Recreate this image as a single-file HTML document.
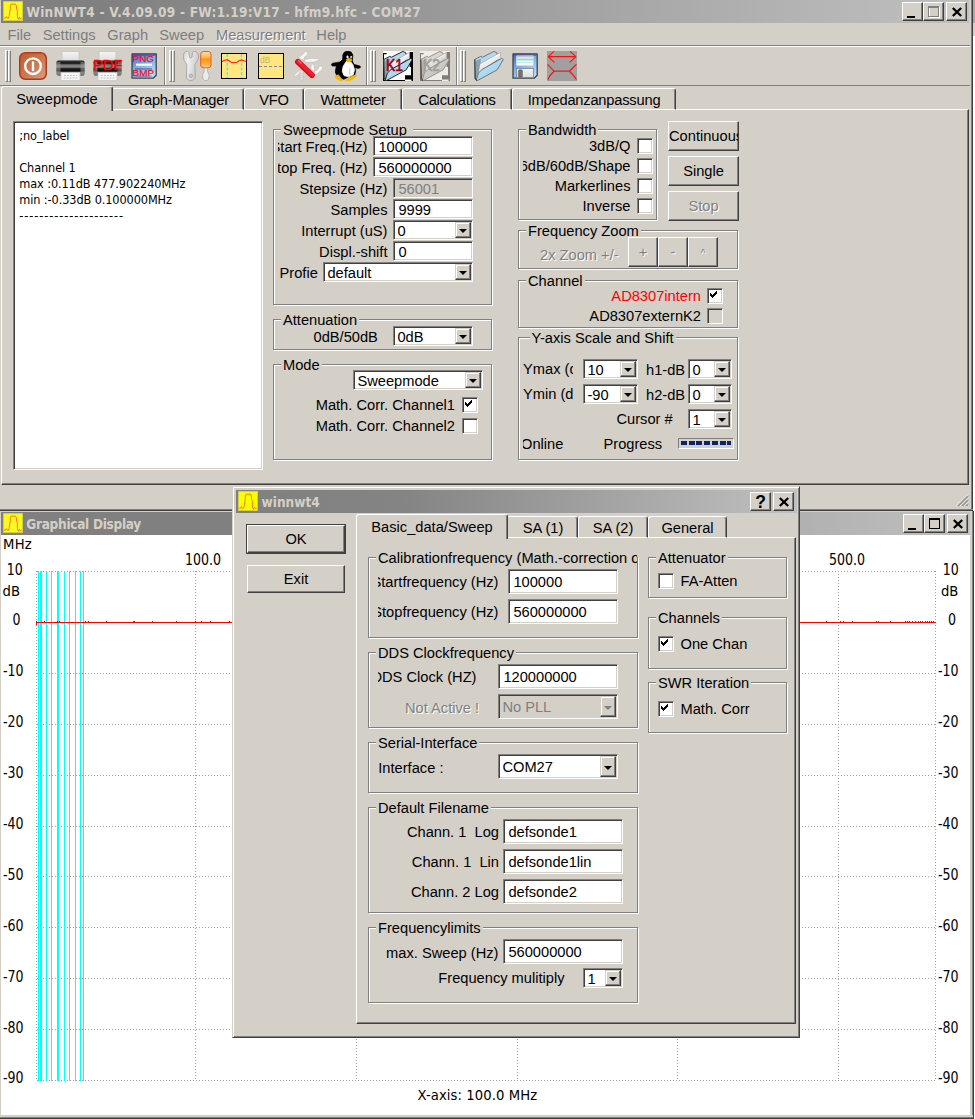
<!DOCTYPE html>
<html><head><meta charset="utf-8"><title>WinNWT4</title>
<style>
html,body{margin:0;padding:0}
body{width:975px;height:1119px;overflow:hidden;background:#d4d0c8;position:relative;
 font-family:"Liberation Sans",sans-serif;font-size:14.67px;color:#000;line-height:17px}
div,span,svg{position:absolute;box-sizing:border-box}
.t{white-space:pre;height:19px;line-height:19px}
.r{text-align:right}
.c{text-align:center}
.dis{color:#808080;text-shadow:1px 1px 0 #fff}
.th{font-family:"DejaVu Sans Condensed","DejaVu Sans",sans-serif}
.ttl{font-family:"DejaVu Sans Condensed","DejaVu Sans",sans-serif;font-weight:bold;color:#d4d0c8;font-size:13.5px;white-space:pre;line-height:20px;height:20px}
.grp{border:1px solid #808080;box-shadow:1px 1px 0 #fff, inset 1px 1px 0 #fff}
.leg{background:#d4d0c8;white-space:pre;height:19px;line-height:19px;padding:0 2px}
.ed{background:#fff;border:1px solid;border-color:#808080 #fff #fff #808080;box-shadow:inset 1px 1px 0 #404040, inset -1px -1px 0 #d4d0c8;white-space:pre;overflow:hidden}
.ed.g{background:#d4d0c8;color:#808080}
.ed span{position:absolute;left:5px;top:1px;height:19px;line-height:19px}
.btn{background:#d4d0c8;border:1px solid;border-color:#fff #404040 #404040 #fff;box-shadow:inset -1px -1px 0 #808080, inset 1px 1px 0 #d4d0c8;text-align:center;white-space:pre;overflow:hidden}
.cb{background:#d4d0c8;border:1px solid;border-color:#d4d0c8 #404040 #404040 #d4d0c8;box-shadow:inset -1px -1px 0 #808080, inset 1px 1px 0 #fff}
.cb i{position:absolute;left:50%;top:50%;margin:-1px 0 0 -4px;width:0;height:0;border-left:4px solid transparent;border-right:4px solid transparent;border-top:4px solid #000}
.cb.g i{border-top-color:#808080}
.chk{background:#fff;border:1px solid;border-color:#808080 #fff #fff #808080;box-shadow:inset 1px 1px 0 #404040, inset -1px -1px 0 #d4d0c8}
.chk.g{background:#d4d0c8}
.tab{border:1px solid;border-color:#fff #404040 transparent #fff;border-radius:3px 3px 0 0;box-shadow:inset -1px 0 0 #808080;background:#d4d0c8;text-align:center;white-space:pre}
.pane{border:1px solid;border-color:#fff #404040 #404040 #fff;box-shadow:inset -1px -1px 0 #808080;background:#d4d0c8}
.hl{height:2px;border-top:1px solid #808080;border-bottom:1px solid #fff}
.hdl{width:3px;border:1px solid;border-color:#fff #808080 #808080 #fff}
.vsep{width:2px;border-left:1px solid #808080;border-right:1px solid #fff}
</style></head>
<body>

<svg width="0" height="0" style="left:0;top:0"><defs>
<linearGradient id="gpw" x1="0" y1="0" x2="1" y2="1"><stop offset="0" stop-color="#c25a2c"/><stop offset="0.55" stop-color="#cf7850"/><stop offset="1" stop-color="#dfa080"/></linearGradient>
<linearGradient id="gpr" x1="0" y1="0" x2="0" y2="1"><stop offset="0" stop-color="#9a9a9a"/><stop offset="0.1" stop-color="#2a2a2a"/><stop offset="0.2" stop-color="#141414"/><stop offset="0.3" stop-color="#727272"/><stop offset="0.44" stop-color="#8c8c8c"/><stop offset="0.52" stop-color="#2a2a2a"/><stop offset="0.66" stop-color="#0c0c0c"/><stop offset="0.78" stop-color="#626262"/><stop offset="1" stop-color="#828282"/></linearGradient>
<linearGradient id="gpp" x1="0" y1="0" x2="0" y2="1"><stop offset="0" stop-color="#f4f4f4"/><stop offset="1" stop-color="#dcdcdc"/></linearGradient>
<linearGradient id="gfl" x1="0" y1="0" x2="0.6" y2="1"><stop offset="0" stop-color="#3c64c0"/><stop offset="0.5" stop-color="#7eaee6"/><stop offset="1" stop-color="#b4dcf6"/></linearGradient>
<linearGradient id="gor" x1="0" y1="0" x2="0" y2="1"><stop offset="0" stop-color="#ffe0b0"/><stop offset="0.36" stop-color="#ffb850"/><stop offset="0.46" stop-color="#ff9608"/><stop offset="0.7" stop-color="#ffa838"/><stop offset="1" stop-color="#ffc880"/></linearGradient>
<linearGradient id="gwr" x1="0" y1="0" x2="1" y2="0.3"><stop offset="0" stop-color="#d0d0d0"/><stop offset="0.35" stop-color="#f0f0f0"/><stop offset="1" stop-color="#cacaca"/></linearGradient>
<linearGradient id="gfo" x1="0" y1="0" x2="1" y2="1"><stop offset="0" stop-color="#c4e4f6"/><stop offset="0.6" stop-color="#aad6ee"/><stop offset="1" stop-color="#9ccae4"/></linearGradient>
<linearGradient id="gfg" x1="0" y1="0" x2="1" y2="1"><stop offset="0" stop-color="#e4e2dc"/><stop offset="1" stop-color="#b4b2ac"/></linearGradient>
<linearGradient id="grd" x1="0" y1="0" x2="1" y2="0"><stop offset="0" stop-color="#ff4050"/><stop offset="1" stop-color="#d00818"/></linearGradient>
</defs></svg>

<div class="" style="left:971px;top:0px;width:1px;height:510px;background:#808080"></div>
<div class="" style="left:972px;top:0px;width:1px;height:511px;background:#404040"></div>
<div class="" style="left:973px;top:0px;width:2px;height:1119px;background:#fff"></div>
<div class="" style="left:973px;top:0px;width:2px;height:23px;background:#a8a8a8"></div>
<div class="" style="left:973px;top:23px;width:2px;height:13px;background:#d4d0c8"></div>
<div class="" style="left:1px;top:0px;width:968px;height:23px;background:linear-gradient(90deg,#808080 0%,#808080 10%,#c0c0c0 100%)"></div>
<svg style="left:3px;top:1px" width="20" height="20" viewBox="0 0 20 20" ><rect width="20" height="20" fill="#ffff00"/><path d="M0 4.5H20M0 8.5H20M0 12.5H20M0 16.5H20M3.5 0V20M7.5 0V20M11.5 0V20M15.5 0V20" stroke="#eeee58" stroke-width="0.8" fill="none"/><path d="M0.6 16.2 L2 17.6 L3.3 15.6 L4.9 17.6 L6.1 15.6 L6.6 11.9 L7.2 8.6 L7.4 4.5 L8.2 3.1 L12.5 3.1 L13.3 4.5 L13.7 8.6 L14.3 10.2 L14.5 16.8 L15.6 18.4 L16.4 16.2 L17.4 17.6 L18.6 17.2" stroke="#ff6200" stroke-width="0.9" fill="none" stroke-linejoin="round" opacity="0.9"/><rect x="0.4" y="0.4" width="19.2" height="19.2" fill="none" stroke="#c4c45c" stroke-width="0.8"/></svg>
<span class="ttl" style="left:26.5px;top:1.8px;letter-spacing:0.27px">WinNWT4 - V.4.09.09 - FW:1.19:V17 - hfm9.hfc - COM27</span>
<div class="btn" style="left:902px;top:2px;width:21px;height:19px;"><svg width="19" height="17" viewBox="0 0 19 17" style="left:0;top:0"><rect x="4" y="13" width="8" height="2" fill="#000"/></svg></div>
<div class="btn" style="left:923px;top:2px;width:21px;height:19px;"><svg width="19" height="17" viewBox="0 0 19 17" style="left:0;top:0"><rect x="5.5" y="4.5" width="10" height="10" fill="none" stroke="#fff" stroke-width="1"/><rect x="4.5" y="3.5" width="10" height="10" fill="none" stroke="#808080" stroke-width="1"/><rect x="4" y="3" width="11" height="2" fill="#808080"/></svg></div>
<div class="btn" style="left:946px;top:2px;width:21px;height:19px;"><svg width="19" height="17" viewBox="0 0 19 17" style="left:0;top:0"><path d="M5.8 5.0 L14.2 13.0 M14.2 5.0 L5.8 13.0" stroke="#000" stroke-width="2.3"/></svg></div>
<span class="t" style="left:7.5px;top:26.4px;color:#7c7c80">File</span>
<span class="t" style="left:42.7px;top:26.4px;color:#7c7c80">Settings</span>
<span class="t" style="left:107.3px;top:26.4px;color:#7c7c80">Graph</span>
<span class="t" style="left:159.3px;top:26.4px;color:#7c7c80">Sweep</span>
<span class="t" style="left:216px;top:26.4px;color:#7c7c80;text-shadow:1px 1px 0 #fff">Measurement</span>
<span class="t" style="left:316.3px;top:26.4px;color:#7c7c80">Help</span>
<div class="hl" style="left:0px;top:45px;width:970px;height:2px;"></div>
<div class="" style="left:0px;top:85px;width:970px;height:1px;background:#808080"></div>
<div class="hdl" style="left:5px;top:50px;width:3px;height:32px;"></div>
<div class="hdl" style="left:8px;top:50px;width:3px;height:32px;"></div>
<div class="hdl" style="left:168.5px;top:50px;width:3px;height:32px;"></div>
<div class="hdl" style="left:171.5px;top:50px;width:3px;height:32px;"></div>
<div class="hdl" style="left:370px;top:50px;width:3px;height:32px;"></div>
<div class="hdl" style="left:373px;top:50px;width:3px;height:32px;"></div>
<div class="hdl" style="left:460px;top:50px;width:3px;height:32px;"></div>
<div class="hdl" style="left:463px;top:50px;width:3px;height:32px;"></div>
<div class="vsep" style="left:164px;top:47px;width:2px;height:38px;"></div>
<div class="vsep" style="left:365.5px;top:47px;width:2px;height:38px;"></div>
<div class="vsep" style="left:455.5px;top:47px;width:2px;height:38px;"></div>
<svg style="left:19px;top:52px" width="28" height="28" viewBox="0 0 28 28" ><rect x="0.75" y="0.75" width="26.5" height="26.5" rx="5.5" fill="url(#gpw)" stroke="#b4381c" stroke-width="1.5"/><circle cx="14" cy="14.2" r="7.8" fill="none" stroke="#fff" stroke-width="2.4"/><rect x="12.8" y="9.2" width="2.4" height="10" rx="1" fill="#fff"/></svg>
<svg style="left:55.5px;top:51px" width="29" height="30" viewBox="0 0 29 30" ><rect x="6" y="0.5" width="17" height="10" fill="url(#gpp)" stroke="#c4c4c4" stroke-width="0.8"/><rect x="0.5" y="9" width="28" height="16" rx="2.5" fill="url(#gpr)"/><rect x="0.5" y="11" width="4" height="12" fill="#9a9a9a" opacity="0.55"/><rect x="24.5" y="11" width="4" height="12" fill="#9a9a9a" opacity="0.55"/><rect x="5" y="21.5" width="19" height="8" fill="#f6f6f6" stroke="#c8c8c8" stroke-width="0.8"/><path d="M8 24.5H21M7.5 27H21.5" stroke="#c0c0c0" stroke-width="0.9" stroke-dasharray="2 1"/></svg>
<svg style="left:92.5px;top:51px" width="30" height="30" viewBox="0 0 30 30" overflow="visible"><rect x="6" y="0.5" width="17" height="10" fill="url(#gpp)" stroke="#c4c4c4" stroke-width="0.8"/><rect x="0.5" y="9" width="28" height="16" rx="2.5" fill="url(#gpr)"/><rect x="0.5" y="11" width="4" height="12" fill="#9a9a9a" opacity="0.55"/><rect x="24.5" y="11" width="4" height="12" fill="#9a9a9a" opacity="0.55"/><rect x="5" y="21.5" width="19" height="8" fill="#f6f6f6" stroke="#c8c8c8" stroke-width="0.8"/><path d="M8 24.5H21M7.5 27H21.5" stroke="#c0c0c0" stroke-width="0.9" stroke-dasharray="2 1"/><text x="0" y="19.3" font-family="Liberation Sans, sans-serif" font-size="14.8" fill="#ff0000" stroke="#ff0000" stroke-width="0.35" textLength="29.5" lengthAdjust="spacingAndGlyphs">PDF</text></svg>
<svg style="left:131px;top:53px" width="26" height="26" viewBox="0 0 26 26" ><path d="M1 0.8H25.2V22.2L22.2 25.2H1Z" fill="url(#gfl)" stroke="#3c444e" stroke-width="1.3" stroke-linejoin="round"/><rect x="1.6" y="1.4" width="23" height="1.4" fill="#4c44b4" opacity="0.85"/><rect x="5" y="10.6" width="16" height="2.2" fill="#f4f8ff"/><rect x="4" y="15.3" width="17" height="1.3" fill="#203060" opacity="0.55"/><rect x="4.5" y="22.4" width="16" height="1.6" fill="#203060" opacity="0.35"/><text x="1.6" y="9.2" font-family="Liberation Sans, sans-serif" font-size="9.3" fill="#f01028" stroke="#f01028" stroke-width="0.25" textLength="21.5" lengthAdjust="spacingAndGlyphs">PNG</text><text x="1.6" y="23" font-family="Liberation Sans, sans-serif" font-size="9.3" fill="#f01028" stroke="#f01028" stroke-width="0.25" textLength="21.5" lengthAdjust="spacingAndGlyphs">BMP</text></svg>
<svg style="left:182.5px;top:51px" width="29" height="30" viewBox="0 0 29 30" ><path d="M3.7 0.4 C1.6 1 0.3 2.6 0.4 4.6 C0.4 6.6 0.6 8.4 1.2 9.6 L3.7 13.4 L3.5 26 C3.6 28.4 5.6 29.5 7.8 29.5 C10 29.5 12.2 28.4 12.3 26 L11.9 13.4 L14.8 9.4 C15.5 8 15.7 6.4 15.6 4.4 C15.4 2.4 14 0.9 11.9 0.4 C10.4 0.2 9.5 0.8 9.4 1.8 L9 6 C8.8 6.8 8.3 7 7.8 7 C7.2 7 6.6 6.8 6.4 6 L5.9 1.8 C5.8 0.8 5 0.2 3.7 0.4 Z" fill="url(#gwr)" stroke="#a4a4a4" stroke-width="0.9"/><circle cx="7.8" cy="24.8" r="1.7" fill="#cfcdc8" stroke="#9c9c9c" stroke-width="0.8"/><rect x="17.7" y="0.5" width="10.3" height="16.3" rx="2.8" fill="url(#gor)" stroke="#d4622a" stroke-width="1"/><path d="M21.2 17 H24.6 V21 C26 22.4 26.4 24 26 26 C25.6 28 25 29 24.4 29.4 H21.4 C20.6 29 20 28 19.6 26 C19.2 24 19.8 22.4 21.2 21 Z" fill="#ececec" stroke="#a8a8a8" stroke-width="0.8"/></svg>
<svg style="left:221px;top:53px" width="26" height="26" viewBox="0 0 26 26" ><rect x="0.5" y="0.5" width="25" height="25" fill="#ffe680" stroke="#000" stroke-width="1"/><path d="M6.3 1V25M20.6 1V25" stroke="#66e4d4" stroke-width="1.5" stroke-dasharray="3 1.5"/><path d="M1 8.4 L3.5 7.2 L6 6.8 L8 7.8 L10.5 9.4 L13.5 9.8 L16 9.2 L18 7.8 L20.5 7 L23 7.8 L25 8.2" stroke="#ff2010" stroke-width="1.1" fill="none" stroke-linejoin="round"/></svg>
<svg style="left:258px;top:53px" width="26" height="26" viewBox="0 0 26 26" ><rect x="0.5" y="0.5" width="25" height="25" fill="#ffe680" stroke="#000" stroke-width="1"/><path d="M1 13.5H25" stroke="#8088a0" stroke-width="1" stroke-dasharray="3 2"/><text x="2" y="9.6" font-family="Liberation Sans, sans-serif" font-size="8.5" fill="#c4b478">dB</text></svg>
<svg style="left:293px;top:51px" width="30" height="30" viewBox="0 0 30 30" ><path d="M5.2 7.3 L12.6 0.4 L14.7 0.7 L14.3 4.4 L12.2 5.2 L10.6 8.9 Z" fill="#f6f6f6" stroke="#c2c0bc" stroke-width="0.7" stroke-linejoin="round"/><path d="M11.4 8.5 L19.6 7.3 L25.3 7.7 L26.1 9.3 L21.2 11 L12.2 11.4 Z" fill="#f6f6f6" stroke="#c2c0bc" stroke-width="0.7" stroke-linejoin="round"/><path d="M18 14.3 L19.6 13 L21.2 14.3 L21.6 21.2 L18 18 Z" fill="#f6f6f6" stroke="#c2c0bc" stroke-width="0.7" stroke-linejoin="round"/><path d="M21.2 20 L23.7 19.6 L27 14.7 L29.8 15.5 L29.4 18 L23.7 23.7 L21.6 23.7 Z" fill="#f6f6f6" stroke="#c2c0bc" stroke-width="0.7" stroke-linejoin="round"/><path d="M1.6 23.7 L7.3 18.4 L8.9 20 L3.2 25.3 L1.1 25.3 Z" fill="#f6f6f6" stroke="#c2c0bc" stroke-width="0.7" stroke-linejoin="round"/><rect x="7" y="19" width="3.2" height="10.4" rx="1.2" fill="#e6e6e6" stroke="#bcbab6" stroke-width="0.7"/><path d="M7.4 22.5H9.8M7.4 24.5H9.8M7.4 26.5H9.8" stroke="#c8c8c8" stroke-width="0.7"/><path d="M4.9 10.9 L18.9 24.2" stroke="#d40c1c" stroke-width="5.8" stroke-linecap="round"/><path d="M5.3 10.5 L19.3 23.8" stroke="#ee2030" stroke-width="3.6" stroke-linecap="round"/><path d="M5.6 9.8 L8 12" stroke="#ff6a74" stroke-width="1.2" stroke-linecap="round"/></svg>
<svg style="left:330.5px;top:51px" width="30" height="30" viewBox="0 0 30 30" ><path d="M16.8 0.1 L13.5 1.1 L11.9 3.6 L11.7 8.5 L7.8 12.2 L5.1 16.3 L4.3 21.2 L6.2 25.3 L12.7 28.3 L16.8 26.4 L23.8 23.9 L24.7 19.6 L22.8 13.4 L21.4 10.0 L21.8 4.0 L20.1 1.1 Z" fill="#000" stroke="#000" stroke-width="0.8" stroke-linejoin="round"/><path d="M0.3 13.2 L1.6 12.2 L9.0 10.9 L11.9 12.6 L6.8 15.2 L1.0 14.9 Z" fill="#000" stroke="#000" stroke-width="0.6" stroke-linejoin="round"/><path d="M21.7 13.0 L23.8 13.6 L29.2 15.1 L29.4 16.7 L26.9 17.5 L22.5 15.7 Z" fill="#000" stroke="#000" stroke-width="0.6" stroke-linejoin="round"/><path d="M15.2 10.5 L12.1 15.5 L11.3 20.4 L13.0 24.6 L17.6 25.8 L22.2 23.8 L23.5 18.8 L21.8 13.4 L19.8 11.0 Z" fill="#fff" stroke="#fff" stroke-width="0.8" stroke-linejoin="round"/><path d="M18.8 17.5 V23" stroke="#d8d8d8" stroke-width="1.6" stroke-linecap="round"/><path d="M4.0 25.1 L7.4 23.7 L11.6 29.3 L9.2 30.1 L4.6 27.0 Z" fill="#f2b90a" stroke="#f2b90a" stroke-width="0.6" stroke-linejoin="round"/><path d="M14.4 28.7 L18.5 26.2 L25.0 23.7 L25.9 25.0 L21.9 28.3 L17.7 30.1 L14.8 29.8 Z" fill="#f2b90a" stroke="#f2b90a" stroke-width="0.6" stroke-linejoin="round"/><ellipse cx="16.5" cy="6.0" rx="1.1" ry="1.4" fill="#f4f4f4"/><ellipse cx="20.1" cy="6.1" rx="1" ry="1.3" fill="#c8c8c8"/><path d="M15.1 8.6 L17.6 6.9 L21.0 8.5 L20.6 10.2 L17.7 11.1 L15.6 9.8 Z" fill="#f0b400" stroke="#f0b400" stroke-width="0.5" stroke-linejoin="round"/></svg>
<svg style="left:383px;top:51px" width="30" height="30" viewBox="0 0 30 30" ><rect width="30" height="30" fill="#fff"/><path d="M0 2H3.6V3.2H1V29H22V30H0Z M26.6 1H30V30H28.4V28.4H22V24.2H28V16H26.6Z" fill="#000"/><path d="M0.7 8.6 L6.8 5.3 L8.4 6.3 L19.9 0.4 L22.8 1.8 L24.6 8 L8 20 L2 28.4 L1 27.4 Z" fill="#b4d8ee" stroke="#101010" stroke-width="0.9" stroke-linejoin="round"/><path d="M1.6 10 L7 7.4 L6.4 13 L4.4 22 L2 27.5 Z" fill="#7e8c98" opacity="0.75"/><path d="M6 13 L24.8 2.4 L26.3 1.7 L25.9 7 L8 18.2 L4.6 22 Z" fill="#fff" stroke="#8a8a8a" stroke-width="0.5"/><path d="M6.4 14.6 L25.8 3.8 L25.9 7 L8 18.2 L4.9 21.4 Z" fill="#e8e8e8" opacity="0.85"/><path d="M2.3 29 L3.4 29.6 L23.2 18.8 L29.3 8.6 L27.7 7.4 L8 18.5 L4.3 22.2 Z" fill="url(#gfo)" stroke="#101010" stroke-width="0.9" stroke-linejoin="round"/><path d="M0.8 8.8 L1.3 27.6 L2.6 29.2" fill="none" stroke="#3c3c3c" stroke-width="1.3" stroke-linecap="round" opacity="0.85"/><text x="3" y="19.7" font-family="Liberation Sans, sans-serif" font-size="15.8" fill="#a40010" stroke="#a40010" stroke-width="0.6" textLength="17" lengthAdjust="spacingAndGlyphs">K1</text></svg>
<svg style="left:420px;top:51px" width="30" height="30" viewBox="0 0 30 30" ><rect width="30" height="30" fill="#efece6"/><path d="M0 2H3.6V3.2H1V29H22V30H0Z M26.6 1H30V30H28.4V28.4H22V24.2H28V16H26.6Z" fill="#807e7a"/><path d="M0.7 8.6 L6.8 5.3 L8.4 6.3 L19.9 0.4 L22.8 1.8 L24.6 8 L8 20 L2 28.4 L1 27.4 Z" fill="#d8d6d0" stroke="#8c8a84" stroke-width="0.9" stroke-linejoin="round"/><path d="M1.6 10 L7 7.4 L6.4 13 L4.4 22 L2 27.5 Z" fill="#a8a6a0" opacity="0.75"/><path d="M6 13 L24.8 2.4 L26.3 1.7 L25.9 7 L8 18.2 L4.6 22 Z" fill="#f4f2ee" stroke="#8a8a8a" stroke-width="0.5"/><path d="M6.4 14.6 L25.8 3.8 L25.9 7 L8 18.2 L4.9 21.4 Z" fill="#dcdad4" opacity="0.85"/><path d="M2.3 29 L3.4 29.6 L23.2 18.8 L29.3 8.6 L27.7 7.4 L8 18.5 L4.3 22.2 Z" fill="url(#gfg)" stroke="#8c8a84" stroke-width="0.9" stroke-linejoin="round"/><path d="M0.8 8.8 L1.3 27.6 L2.6 29.2" fill="none" stroke="#3c3c3c" stroke-width="1.3" stroke-linecap="round" opacity="0.85"/><text x="3" y="19.7" font-family="Liberation Sans, sans-serif" font-size="15.8" fill="#a09e98" stroke="#a09e98" stroke-width="0.6" textLength="17" lengthAdjust="spacingAndGlyphs">K2</text></svg>
<svg style="left:473.5px;top:51px" width="30" height="30" viewBox="0 0 30 30" ><path d="M0.7 8.6 L6.8 5.3 L8.4 6.3 L19.9 0.4 L22.8 1.8 L24.6 8 L8 20 L2 28.4 L1 27.4 Z" fill="#b4d8ee" stroke="#5c6c78" stroke-width="0.9" stroke-linejoin="round"/><path d="M1.6 10 L7 7.4 L6.4 13 L4.4 22 L2 27.5 Z" fill="#7e8c98" opacity="0.75"/><path d="M6 13 L24.8 2.4 L26.3 1.7 L25.9 7 L8 18.2 L4.6 22 Z" fill="#fff" stroke="#8a8a8a" stroke-width="0.5"/><path d="M6.4 14.6 L25.8 3.8 L25.9 7 L8 18.2 L4.9 21.4 Z" fill="#e8e8e8" opacity="0.85"/><path d="M2.3 29 L3.4 29.6 L23.2 18.8 L29.3 8.6 L27.7 7.4 L8 18.5 L4.3 22.2 Z" fill="url(#gfo)" stroke="#5c6c78" stroke-width="0.9" stroke-linejoin="round"/><path d="M0.8 8.8 L1.3 27.6 L2.6 29.2" fill="none" stroke="#3c3c3c" stroke-width="1.3" stroke-linecap="round" opacity="0.85"/></svg>
<svg style="left:512px;top:53px" width="26" height="26" viewBox="0 0 26 26" ><path d="M1 0.8H25.2V22.2L22.2 25.2H1Z" fill="url(#gfl)" stroke="#3c444e" stroke-width="1.3" stroke-linejoin="round"/><rect x="1.6" y="1.4" width="23" height="1.4" fill="#4c44b4" opacity="0.85"/><rect x="4.4" y="2.6" width="17" height="10" fill="#f8fafa"/><path d="M4.4 3.6H21.4M4.4 6.2H21.4" stroke="#c2c6c6" stroke-width="1.5"/><path d="M4.4 4.9H21.4M4.4 7.6H21.4M4.4 9.6H21.4" stroke="#bcecec" stroke-width="1"/><rect x="4.4" y="15.6" width="17" height="9" fill="url(#gpp)" stroke="#70787e" stroke-width="0.7"/><rect x="6.4" y="16.8" width="4" height="7.4" rx="0.9" fill="#707070" stroke="#5c5c5c" stroke-width="0.5"/></svg>
<svg style="left:547px;top:51px" width="30" height="30" viewBox="0 0 30 30" ><rect width="30" height="30" fill="#a0a0a0"/><path d="M1 5.6H29 M1 5.6L7 0.4 M1 5.6L7.4 11.4 M29 5.6L23 0.4 M29 5.6L22.6 11.4" stroke="#ff1010" stroke-width="1.1" fill="none"/><path d="M7 20.2H22.4 M7 20.2L0.6 13.4 M7 20.2 C4.6 22.4 2.4 25 0.8 28.6 M22.4 20.2L29.4 13.4 M22.4 20.2 C24.8 22.4 27.6 25 29.4 28.6" stroke="#ff1010" stroke-width="1.2" fill="none"/></svg>
<div class="pane" style="left:1px;top:109px;width:968px;height:376px;"></div>
<div class="tab" style="left:113px;top:88px;width:131px;height:22px;border-bottom:1px solid #fff;border-left-color:transparent;border-radius:0 3px 0 0"><span class="t" style="left:0;right:0;top:2px;text-align:center;letter-spacing:-0.2px">Graph-Manager</span></div>
<div class="tab" style="left:244px;top:88px;width:60px;height:22px;border-bottom:1px solid #fff"><span class="t" style="left:0;right:0;top:2px;text-align:center;letter-spacing:-0.2px">VFO</span></div>
<div class="tab" style="left:304px;top:88px;width:98px;height:22px;border-bottom:1px solid #fff"><span class="t" style="left:0;right:0;top:2px;text-align:center;letter-spacing:-0.2px">Wattmeter</span></div>
<div class="tab" style="left:402px;top:88px;width:110px;height:22px;border-bottom:1px solid #fff"><span class="t" style="left:0;right:0;top:2px;text-align:center;letter-spacing:-0.2px">Calculations</span></div>
<div class="tab" style="left:512px;top:88px;width:164px;height:22px;border-bottom:1px solid #fff"><span class="t" style="left:0;right:0;top:2px;text-align:center;letter-spacing:-0.2px">Impedanzanpassung</span></div>
<div class="tab" style="left:1px;top:86px;width:112px;height:25px;border-bottom:none"><span class="t" style="left:0;right:0;top:3px;text-align:center">Sweepmode</span></div>
<div class="ed" style="left:13px;top:121px;width:250px;height:349px;"></div>
<span class="t th" style="left:19.3px;top:127.6px;font-size:12.6px;line-height:16px;height:16px;letter-spacing:-0.1px">;no_label</span>
<span class="t th" style="left:19.3px;top:159.6px;font-size:12.6px;line-height:16px;height:16px;letter-spacing:-0.1px">Channel 1</span>
<span class="t th" style="left:19.3px;top:175.6px;font-size:12.6px;line-height:16px;height:16px;letter-spacing:-0.1px">max :0.11dB 477.902240MHz</span>
<span class="t th" style="left:19.3px;top:191.6px;font-size:12.6px;line-height:16px;height:16px;letter-spacing:-0.1px">min :-0.33dB 0.100000MHz</span>
<span class="t th" style="left:19.3px;top:207.6px;font-size:12.6px;line-height:16px;height:16px;letter-spacing:0.9px">---------------------</span>
<div class="grp" style="left:273px;top:129px;width:219px;height:176px;"></div>
<span class="leg" style="left:281px;top:121.4px;">Sweepmode Setup </span>
<div style="left:278px;top:137px;width:91px;height:18px;overflow:hidden"><span class="t" style="right:1.5px;top:1.4px">Start Freq.(Hz)</span></div>
<div style="left:278px;top:158px;width:91px;height:18px;overflow:hidden"><span class="t" style="right:1.5px;top:1.4px">Stop Freq. (Hz)</span></div>
<span class="t r" style="right:587.5px;top:180.4px;">Stepsize (Hz)</span>
<span class="t r" style="right:587.5px;top:201.4px;">Samples</span>
<span class="t r" style="right:587.5px;top:222.4px;">Interrupt (uS)</span>
<span class="t r" style="right:587.5px;top:243.4px;">Displ.-shift</span>
<div class="ed" style="left:373px;top:136px;width:100px;height:20px"><span style="left:4.4px;top:1.4px">100000</span></div>
<div class="ed" style="left:373px;top:157px;width:100px;height:20px"><span style="left:4.4px;top:1.4px">560000000</span></div>
<div class="ed g" style="left:393px;top:178px;width:80px;height:20px"><span style="left:4.4px;top:1.4px">56001</span></div>
<div class="ed" style="left:393px;top:199px;width:80px;height:20px"><span style="left:4.4px;top:1.4px">9999</span></div>
<div class="ed" style="left:393px;top:220px;width:80px;height:20px"><span style="left:3.4px;top:1.4px">0</span><div class="cb" style="right:1px;top:1px;width:16px;height:16px"><i></i></div></div>
<div class="ed" style="left:393px;top:241px;width:80px;height:20px"><span style="left:4.4px;top:1.4px">0</span></div>
<span class="t" style="left:279.5px;top:264.4px;">Profie</span>
<div class="ed" style="left:323px;top:262px;width:150px;height:20px"><span style="left:3.4px;top:1.4px">default</span><div class="cb" style="right:1px;top:1px;width:16px;height:16px"><i></i></div></div>
<div class="grp" style="left:273px;top:319px;width:219px;height:31px;"></div>
<span class="leg" style="left:281px;top:311.4px;">Attenuation</span>
<span class="t" style="left:313.5px;top:328.4px;">0dB/50dB</span>
<div class="ed" style="left:393px;top:326px;width:80px;height:20px"><span style="left:3.4px;top:1.4px">0dB</span><div class="cb" style="right:1px;top:1px;width:16px;height:16px"><i></i></div></div>
<div class="grp" style="left:273px;top:364px;width:219px;height:96px;"></div>
<span class="leg" style="left:281px;top:356.4px;">Mode</span>
<div class="ed" style="left:353px;top:370px;width:130px;height:20px"><span style="left:3.4px;top:1.4px">Sweepmode</span><div class="cb" style="right:1px;top:1px;width:16px;height:16px"><i></i></div></div>
<span class="t r" style="right:520px;top:396.4px;">Math. Corr. Channel1</span>
<div class="chk" style="left:462px;top:397px;width:16px;height:16px;"><svg width="7" height="7" viewBox="0 0 7 7" style="left:2px;top:2px" shape-rendering="crispEdges"><rect x="0" y="2" width="1" height="3" fill="#000"/><rect x="1" y="3" width="1" height="3" fill="#000"/><rect x="2" y="4" width="1" height="3" fill="#000"/><rect x="3" y="3" width="1" height="3" fill="#000"/><rect x="4" y="2" width="1" height="3" fill="#000"/><rect x="5" y="1" width="1" height="3" fill="#000"/><rect x="6" y="0" width="1" height="3" fill="#000"/></svg></div>
<span class="t r" style="right:520px;top:417.4px;">Math. Corr. Channel2</span>
<div class="chk" style="left:462px;top:418px;width:16px;height:16px;"></div>
<div class="grp" style="left:518px;top:129px;width:139px;height:91px;"></div>
<span class="leg" style="left:526px;top:121.4px;">Bandwidth</span>
<div style="left:523px;top:137px;width:109px;height:19px;overflow:hidden"><span class="t" style="right:1.5px;top:0px">3dB/Q</span></div>
<div class="chk" style="left:637px;top:138px;width:16px;height:16px;"></div>
<div style="left:523px;top:157px;width:109px;height:19px;overflow:hidden"><span class="t" style="right:1.5px;top:0px">6dB/60dB/Shape</span></div>
<div class="chk" style="left:637px;top:158px;width:16px;height:16px;"></div>
<div style="left:523px;top:177px;width:109px;height:19px;overflow:hidden"><span class="t" style="right:1.5px;top:0px">Markerlines</span></div>
<div class="chk" style="left:637px;top:178px;width:16px;height:16px;"></div>
<div style="left:523px;top:197px;width:109px;height:19px;overflow:hidden"><span class="t" style="right:1.5px;top:0px">Inverse</span></div>
<div class="chk" style="left:637px;top:198px;width:16px;height:16px;"></div>
<div class="btn" style="left:668px;top:121px;width:71px;height:30px;"><span class="t" style="left:0;right:0;top:5px;text-align:center;">Continuous</span></div>
<div class="btn" style="left:668px;top:156px;width:71px;height:30px;"><span class="t" style="left:0;right:0;top:5px;text-align:center;">Single</span></div>
<div class="btn" style="left:668px;top:191px;width:71px;height:30px;"><span class="t dis" style="left:0;right:0;top:5px;text-align:center;">Stop</span></div>
<div class="grp" style="left:518px;top:230px;width:220px;height:39px;"></div>
<span class="leg" style="left:526px;top:222.4px;">Frequency Zoom</span>
<span class="t dis" style="left:540px;top:245.9px;">2x Zoom +/-</span>
<div class="btn" style="left:628px;top:237px;width:30px;height:30px;"><span class="t dis" style="left:0;right:0;top:5px;text-align:center;">+</span></div>
<div class="btn" style="left:658px;top:237px;width:30px;height:30px;"><span class="t dis" style="left:0;right:0;top:5px;text-align:center;">-</span></div>
<div class="btn" style="left:688px;top:237px;width:30px;height:30px;"><span class="t dis" style="left:0;right:0;top:5px;text-align:center;font-size:10px;top:6px">^</span></div>
<div class="grp" style="left:518px;top:280px;width:220px;height:48px;"></div>
<span class="leg" style="left:526px;top:272.4px;">Channel</span>
<span class="t r" style="right:274px;top:287.4px;color:#ff0000">AD8307intern</span>
<div class="chk" style="left:707px;top:288px;width:16px;height:16px;"><svg width="7" height="7" viewBox="0 0 7 7" style="left:2px;top:2px" shape-rendering="crispEdges"><rect x="0" y="2" width="1" height="3" fill="#000"/><rect x="1" y="3" width="1" height="3" fill="#000"/><rect x="2" y="4" width="1" height="3" fill="#000"/><rect x="3" y="3" width="1" height="3" fill="#000"/><rect x="4" y="2" width="1" height="3" fill="#000"/><rect x="5" y="1" width="1" height="3" fill="#000"/><rect x="6" y="0" width="1" height="3" fill="#000"/></svg></div>
<span class="t r" style="right:274px;top:307.4px;">AD8307externK2</span>
<div class="chk g" style="left:707px;top:308px;width:16px;height:16px;"></div>
<div class="grp" style="left:518px;top:337px;width:220px;height:123px;"></div>
<span class="leg" style="left:529.5px;top:329.4px;">Y-axis Scale and Shift</span>
<div style="left:523px;top:360px;width:50px;height:18px;overflow:hidden"><span class="t" style="left:0;top:0">Ymax (dB)</span></div>
<div style="left:523px;top:385px;width:50px;height:18px;overflow:hidden"><span class="t" style="left:0;top:0">Ymin (dB)</span></div>
<div class="ed" style="left:583px;top:359px;width:55px;height:20px"><span style="left:3.4px;top:1.4px">10</span><div class="cb" style="right:1px;top:1px;width:16px;height:16px"><i></i></div></div>
<div class="ed" style="left:583px;top:384px;width:55px;height:20px"><span style="left:3.4px;top:1.4px">-90</span><div class="cb" style="right:1px;top:1px;width:16px;height:16px"><i></i></div></div>
<span class="t" style="left:646px;top:361.4px;">h1-dB</span>
<span class="t" style="left:646px;top:386.4px;">h2-dB</span>
<div class="ed" style="left:688px;top:359px;width:44px;height:20px"><span style="left:3.4px;top:1.4px">0</span><div class="cb" style="right:1px;top:1px;width:16px;height:16px"><i></i></div></div>
<div class="ed" style="left:688px;top:384px;width:44px;height:20px"><span style="left:3.4px;top:1.4px">0</span><div class="cb" style="right:1px;top:1px;width:16px;height:16px"><i></i></div></div>
<span class="t" style="left:616.5px;top:409.9px;">Cursor #</span>
<div class="ed" style="left:688px;top:409px;width:44px;height:20px"><span style="left:3.4px;top:1.4px">1</span><div class="cb" style="right:1px;top:1px;width:16px;height:16px"><i></i></div></div>
<div style="left:523px;top:434px;width:60px;height:18px;overflow:hidden"><span class="t" style="left:-2px;top:1.4px">Online</span></div>
<span class="t" style="left:603.5px;top:434.6px;">Progress</span>
<div class="" style="left:678px;top:438px;width:56px;height:11px;border:1px solid;border-color:#808080 #fff #fff #808080;background:#d4d0c8"><div style="left:2px;top:2px;width:50px;height:4px;background:repeating-linear-gradient(90deg,#0a246a 0,#0a246a 6px,transparent 6px,transparent 7.7px)"></div></div>
<svg style="left:956px;top:494px" width="13" height="13" viewBox="0 0 13 13" ><path d="M12 0.5L0.5 12M12 4.5L4.5 12M12 8.5L8.5 12" stroke="#fff" stroke-width="1"/><path d="M12 1.5L1.5 12M12 2.5L2.5 12M12 5.5L5.5 12M12 6.5L6.5 12M12 9.5L9.5 12M12 10.5L10.5 12" stroke="#808080" stroke-width="1"/></svg>
<div class="" style="left:0px;top:509px;width:973px;height:1px;background:#808080"></div>
<div class="" style="left:0px;top:510px;width:973px;height:1px;background:#404040"></div>
<div class="" style="left:0px;top:511px;width:973px;height:608px;background:#d4d0c8"></div>
<div class="" style="left:972px;top:511px;width:1px;height:607px;background:#808080"></div>
<div class="" style="left:973px;top:511px;width:1px;height:608px;background:#404040"></div>
<div class="" style="left:1px;top:512px;width:969px;height:23px;background:linear-gradient(90deg,#808080 0%,#808080 25%,#c0c0c0 100%)"></div>
<svg style="left:3px;top:513px" width="20" height="20" viewBox="0 0 20 20" ><rect width="20" height="20" fill="#ffff00"/><path d="M0 4.5H20M0 8.5H20M0 12.5H20M0 16.5H20M3.5 0V20M7.5 0V20M11.5 0V20M15.5 0V20" stroke="#eeee58" stroke-width="0.8" fill="none"/><path d="M0.6 16.2 L2 17.6 L3.3 15.6 L4.9 17.6 L6.1 15.6 L6.6 11.9 L7.2 8.6 L7.4 4.5 L8.2 3.1 L12.5 3.1 L13.3 4.5 L13.7 8.6 L14.3 10.2 L14.5 16.8 L15.6 18.4 L16.4 16.2 L17.4 17.6 L18.6 17.2" stroke="#ff6200" stroke-width="0.9" fill="none" stroke-linejoin="round" opacity="0.9"/><rect x="0.4" y="0.4" width="19.2" height="19.2" fill="none" stroke="#c4c45c" stroke-width="0.8"/></svg>
<span class="ttl" style="left:26.3px;top:513.5px;letter-spacing:-0.28px">Graphical Display</span>
<div class="btn" style="left:903px;top:514px;width:21px;height:19px;"><svg width="19" height="17" viewBox="0 0 19 17" style="left:0;top:0"><rect x="4" y="13" width="8" height="2" fill="#000"/></svg></div>
<div class="btn" style="left:924px;top:514px;width:21px;height:19px;"><svg width="19" height="17" viewBox="0 0 19 17" style="left:0;top:0"><rect x="4.5" y="3.5" width="10" height="10" fill="none" stroke="#000" stroke-width="1"/><rect x="4" y="3" width="11" height="2" fill="#000"/></svg></div>
<div class="btn" style="left:947px;top:514px;width:21px;height:19px;"><svg width="19" height="17" viewBox="0 0 19 17" style="left:0;top:0"><path d="M5.8 5.0 L14.2 13.0 M14.2 5.0 L5.8 13.0" stroke="#000" stroke-width="2.3"/></svg></div>
<div class="" style="left:1px;top:535px;width:969px;height:580px;background:#fff"></div>
<div class="" style="left:0px;top:1115px;width:973px;height:2px;background:#d4d0c8"></div>
<div class="" style="left:0px;top:1117px;width:973px;height:1px;background:#808080"></div>
<div class="" style="left:0px;top:1118px;width:974px;height:1px;background:#404040"></div>
<svg style="left:0px;top:0px" width="975" height="1119" viewBox="0 0 975 1119" ><path d="M37 571.5H936" stroke="#a0a0a4" stroke-width="1" stroke-dasharray="1 2"/><path d="M37 622.5H936" stroke="#a0a0a4" stroke-width="1" stroke-dasharray="1 2"/><path d="M37 673.5H936" stroke="#a0a0a4" stroke-width="1" stroke-dasharray="1 2"/><path d="M37 724.5H936" stroke="#a0a0a4" stroke-width="1" stroke-dasharray="1 2"/><path d="M37 775.5H936" stroke="#a0a0a4" stroke-width="1" stroke-dasharray="1 2"/><path d="M37 826.5H936" stroke="#a0a0a4" stroke-width="1" stroke-dasharray="1 2"/><path d="M37 876.5H936" stroke="#a0a0a4" stroke-width="1" stroke-dasharray="1 2"/><path d="M37 927.5H936" stroke="#a0a0a4" stroke-width="1" stroke-dasharray="1 2"/><path d="M37 978.5H936" stroke="#a0a0a4" stroke-width="1" stroke-dasharray="1 2"/><path d="M37 1029.5H936" stroke="#a0a0a4" stroke-width="1" stroke-dasharray="1 2"/><path d="M37 1080.5H936" stroke="#a0a0a4" stroke-width="1" stroke-dasharray="1 2"/><path d="M36.5 571V1081" stroke="#a0a0a4" stroke-width="1" stroke-dasharray="1 2"/><path d="M195.5 571V1081" stroke="#a0a0a4" stroke-width="1" stroke-dasharray="1 2"/><path d="M356.5 571V1081" stroke="#a0a0a4" stroke-width="1" stroke-dasharray="1 2"/><path d="M517.5 571V1081" stroke="#a0a0a4" stroke-width="1" stroke-dasharray="1 2"/><path d="M677.5 571V1081" stroke="#a0a0a4" stroke-width="1" stroke-dasharray="1 2"/><path d="M838.5 571V1081" stroke="#a0a0a4" stroke-width="1" stroke-dasharray="1 2"/><path d="M935.5 571V1081" stroke="#a0a0a4" stroke-width="1" stroke-dasharray="1 2"/><rect x="38" y="571" width="1" height="510" fill="#00ffff"/><rect x="40" y="571" width="2" height="510" fill="#00ffff"/><rect x="46" y="571" width="1" height="510" fill="#00ffff"/><rect x="51" y="571" width="1" height="510" fill="#00ffff"/><rect x="57" y="571" width="2" height="510" fill="#00ffff"/><rect x="64" y="571" width="1" height="510" fill="#00ffff"/><rect x="69" y="571" width="1" height="510" fill="#00ffff"/><rect x="75" y="571" width="1" height="510" fill="#00ffff"/><rect x="80" y="571" width="1" height="510" fill="#00ffff"/><rect x="83" y="571" width="1" height="510" fill="#00ffff"/><rect x="36" y="622" width="900" height="1" fill="#ff0000"/><rect x="36" y="621" width="1" height="4" fill="#ff0000"/><rect x="44" y="621" width="1" height="1" fill="#ff0000"/><rect x="57" y="621" width="1" height="1" fill="#ff0000"/><rect x="59" y="621" width="1" height="1" fill="#ff0000"/><rect x="85" y="621" width="1" height="1" fill="#ff0000"/><rect x="88" y="621" width="1" height="1" fill="#ff0000"/><rect x="106" y="621" width="1" height="1" fill="#ff0000"/><rect x="133" y="621" width="1" height="1" fill="#ff0000"/><rect x="134" y="621" width="1" height="1" fill="#ff0000"/><rect x="152" y="621" width="1" height="1" fill="#ff0000"/><rect x="176" y="621" width="1" height="1" fill="#ff0000"/><rect x="195" y="621" width="1" height="1" fill="#ff0000"/><rect x="201" y="621" width="1" height="1" fill="#ff0000"/><rect x="210" y="621" width="1" height="1" fill="#ff0000"/><rect x="229" y="621" width="1" height="1" fill="#ff0000"/><rect x="826" y="621" width="1" height="1" fill="#ff0000"/><rect x="840" y="621" width="1" height="1" fill="#ff0000"/><rect x="843" y="621" width="1" height="1" fill="#ff0000"/><rect x="852" y="621" width="1" height="1" fill="#ff0000"/><rect x="876" y="621" width="1" height="1" fill="#ff0000"/><rect x="878" y="621" width="1" height="1" fill="#ff0000"/><rect x="890" y="621" width="1" height="1" fill="#ff0000"/><rect x="905" y="621" width="1" height="1" fill="#ff0000"/><rect x="907" y="621" width="1" height="1" fill="#ff0000"/><rect x="909" y="621" width="1" height="1" fill="#ff0000"/><rect x="912" y="621" width="1" height="1" fill="#ff0000"/><rect x="915" y="621" width="1" height="1" fill="#ff0000"/><rect x="918" y="621" width="1" height="1" fill="#ff0000"/><rect x="920" y="621" width="1" height="1" fill="#ff0000"/><rect x="922" y="621" width="1" height="1" fill="#ff0000"/><rect x="925" y="621" width="1" height="1" fill="#ff0000"/><rect x="927" y="621" width="1" height="1" fill="#ff0000"/><rect x="929" y="621" width="1" height="1" fill="#ff0000"/><rect x="931" y="621" width="1" height="1" fill="#ff0000"/><rect x="933" y="621" width="1" height="1" fill="#ff0000"/></svg>
<span class="t th" style="left:3px;top:535px;font-size:14.67px;line-height:17px;height:17px;letter-spacing:0.25px">MHz</span>
<span class="t th" style="left:185.4px;top:551.4px;font-size:14.67px;line-height:17px;height:17px;transform:scale(0.953,1.08);transform-origin:left bottom">100.0</span>
<span class="t th" style="left:828.8px;top:551.4px;font-size:14.67px;line-height:17px;height:17px;transform:scale(0.953,1.08);transform-origin:left bottom">500.0</span>
<span class="t th r" style="right:951.9px;top:560.5px;font-size:14.67px;line-height:17px;height:17px;transform:scale(0.953,1.08);transform-origin:right bottom">10</span>
<span class="t th r" style="right:16.399999999999977px;top:560.5px;font-size:14.67px;line-height:17px;height:17px;transform:scale(0.953,1.08);transform-origin:right bottom">10</span>
<span class="t th r" style="right:954.6px;top:611.3px;font-size:14.67px;line-height:17px;height:17px;transform:scale(0.953,1.08);transform-origin:right bottom">0</span>
<span class="t th" style="left:947.6px;top:611.3px;font-size:14.67px;line-height:17px;height:17px;transform:scale(0.953,1.08);transform-origin:left bottom">0</span>
<span class="t th r" style="right:951.9px;top:662.2px;font-size:14.67px;line-height:17px;height:17px;transform:scale(0.953,1.08);transform-origin:right bottom">-10</span>
<span class="t th r" style="right:16.399999999999977px;top:662.2px;font-size:14.67px;line-height:17px;height:17px;transform:scale(0.953,1.08);transform-origin:right bottom">-10</span>
<span class="t th r" style="right:951.9px;top:713.1px;font-size:14.67px;line-height:17px;height:17px;transform:scale(0.953,1.08);transform-origin:right bottom">-20</span>
<span class="t th r" style="right:16.399999999999977px;top:713.1px;font-size:14.67px;line-height:17px;height:17px;transform:scale(0.953,1.08);transform-origin:right bottom">-20</span>
<span class="t th r" style="right:951.9px;top:764.0px;font-size:14.67px;line-height:17px;height:17px;transform:scale(0.953,1.08);transform-origin:right bottom">-30</span>
<span class="t th r" style="right:16.399999999999977px;top:764.0px;font-size:14.67px;line-height:17px;height:17px;transform:scale(0.953,1.08);transform-origin:right bottom">-30</span>
<span class="t th r" style="right:951.9px;top:814.9px;font-size:14.67px;line-height:17px;height:17px;transform:scale(0.953,1.08);transform-origin:right bottom">-40</span>
<span class="t th r" style="right:16.399999999999977px;top:814.9px;font-size:14.67px;line-height:17px;height:17px;transform:scale(0.953,1.08);transform-origin:right bottom">-40</span>
<span class="t th r" style="right:951.9px;top:865.8px;font-size:14.67px;line-height:17px;height:17px;transform:scale(0.953,1.08);transform-origin:right bottom">-50</span>
<span class="t th r" style="right:16.399999999999977px;top:865.8px;font-size:14.67px;line-height:17px;height:17px;transform:scale(0.953,1.08);transform-origin:right bottom">-50</span>
<span class="t th r" style="right:951.9px;top:916.7px;font-size:14.67px;line-height:17px;height:17px;transform:scale(0.953,1.08);transform-origin:right bottom">-60</span>
<span class="t th r" style="right:16.399999999999977px;top:916.7px;font-size:14.67px;line-height:17px;height:17px;transform:scale(0.953,1.08);transform-origin:right bottom">-60</span>
<span class="t th r" style="right:951.9px;top:967.6px;font-size:14.67px;line-height:17px;height:17px;transform:scale(0.953,1.08);transform-origin:right bottom">-70</span>
<span class="t th r" style="right:16.399999999999977px;top:967.6px;font-size:14.67px;line-height:17px;height:17px;transform:scale(0.953,1.08);transform-origin:right bottom">-70</span>
<span class="t th r" style="right:951.9px;top:1018.5px;font-size:14.67px;line-height:17px;height:17px;transform:scale(0.953,1.08);transform-origin:right bottom">-80</span>
<span class="t th r" style="right:16.399999999999977px;top:1018.5px;font-size:14.67px;line-height:17px;height:17px;transform:scale(0.953,1.08);transform-origin:right bottom">-80</span>
<span class="t th r" style="right:951.9px;top:1069.4px;font-size:14.67px;line-height:17px;height:17px;transform:scale(0.953,1.08);transform-origin:right bottom">-90</span>
<span class="t th r" style="right:16.399999999999977px;top:1069.4px;font-size:14.67px;line-height:17px;height:17px;transform:scale(0.953,1.08);transform-origin:right bottom">-90</span>
<span class="t th" style="left:2.6px;top:581.6px;font-size:14.67px;line-height:17px;height:17px">dB</span>
<span class="t th" style="left:941px;top:581.6px;font-size:14.67px;line-height:17px;height:17px">dB</span>
<span class="t th" style="left:417.6px;top:1086.4px;font-size:14.67px;line-height:17px;height:17px;letter-spacing:0.08px">X-axis: 100.0 MHz</span>
<div class="" style="left:232px;top:486px;width:568px;height:552px;background:#d4d0c8;border:1px solid;border-color:#d4d0c8 #404040 #404040 #d4d0c8;box-shadow:inset 1px 1px 0 #fff, inset -1px -1px 0 #808080"></div>
<div class="" style="left:236px;top:490px;width:561px;height:23px;background:linear-gradient(90deg,#808080 0%,#848484 30%,#c0c0c0 100%)"></div>
<svg style="left:238px;top:491px" width="20" height="20" viewBox="0 0 20 20" ><rect width="20" height="20" fill="#ffff00"/><path d="M0 4.5H20M0 8.5H20M0 12.5H20M0 16.5H20M3.5 0V20M7.5 0V20M11.5 0V20M15.5 0V20" stroke="#eeee58" stroke-width="0.8" fill="none"/><path d="M0.6 16.2 L2 17.6 L3.3 15.6 L4.9 17.6 L6.1 15.6 L6.6 11.9 L7.2 8.6 L7.4 4.5 L8.2 3.1 L12.5 3.1 L13.3 4.5 L13.7 8.6 L14.3 10.2 L14.5 16.8 L15.6 18.4 L16.4 16.2 L17.4 17.6 L18.6 17.2" stroke="#ff6200" stroke-width="0.9" fill="none" stroke-linejoin="round" opacity="0.9"/><rect x="0.4" y="0.4" width="19.2" height="19.2" fill="none" stroke="#c4c45c" stroke-width="0.8"/></svg>
<span class="ttl" style="left:261.5px;top:491.5px;">winnwt4</span>
<div class="btn" style="left:750px;top:492px;width:21px;height:19px;"><svg width="19" height="17" viewBox="0 0 19 17" style="left:0;top:0"><text x="9.5" y="15" text-anchor="middle" font-family="Liberation Sans, sans-serif" font-weight="bold" font-size="17.5" fill="#000">?</text></svg></div>
<div class="btn" style="left:773px;top:492px;width:21px;height:19px;"><svg width="19" height="17" viewBox="0 0 19 17" style="left:0;top:0"><path d="M5.8 5.0 L14.2 13.0 M14.2 5.0 L5.8 13.0" stroke="#000" stroke-width="2.3"/></svg></div>
<div class="" style="left:246px;top:524px;width:100px;height:30px;background:#404040"></div>
<div class="btn" style="left:247px;top:525px;width:98px;height:28px;"><span class="t" style="left:0;right:0;top:4px;text-align:center;">OK</span></div>
<div class="btn" style="left:247px;top:565px;width:98px;height:28px;"><span class="t" style="left:0;right:0;top:4px;text-align:center;">Exit</span></div>
<div class="pane" style="left:356px;top:537px;width:440px;height:487px;"></div>
<div class="tab" style="left:508px;top:516px;width:70px;height:22px;border-bottom:1px solid #fff;border-left-color:transparent;border-radius:0 3px 0 0"><span class="t" style="left:0;right:0;top:2px;text-align:center">SA (1)</span></div>
<div class="tab" style="left:578px;top:516px;width:70px;height:22px;border-bottom:1px solid #fff"><span class="t" style="left:0;right:0;top:2px;text-align:center">SA (2)</span></div>
<div class="tab" style="left:648px;top:516px;width:79px;height:22px;border-bottom:1px solid #fff"><span class="t" style="left:0;right:0;top:2px;text-align:center">General</span></div>
<div class="tab" style="left:356px;top:514px;width:152px;height:25px;border-bottom:none"><span class="t" style="left:0;right:0;top:3px;text-align:center">Basic_data/Sweep</span></div>
<div class="grp" style="left:368px;top:557px;width:270px;height:81px;"></div>
<span class="leg" style="left:376px;top:549.4px;width:261px;overflow:hidden;">Calibrationfrequency (Math.-correction only)</span>
<div style="left:378px;top:573px;width:122px;height:20px;overflow:hidden"><span class="t" style="right:1.5px;top:0.4px">Startfrequency (Hz)</span></div>
<div style="left:378px;top:603px;width:122px;height:20px;overflow:hidden"><span class="t" style="right:1.5px;top:0.4px">Stopfrequency (Hz)</span></div>
<div class="ed" style="left:508px;top:569px;width:110px;height:25px"><span style="left:4.4px;top:3.2px">100000</span></div>
<div class="ed" style="left:508px;top:599px;width:110px;height:25px"><span style="left:4.4px;top:3.2px">560000000</span></div>
<div class="grp" style="left:368px;top:652px;width:270px;height:76px;"></div>
<span class="leg" style="left:376px;top:644.4px;">DDS Clockfrequency</span>
<div style="left:378px;top:668px;width:100px;height:20px;overflow:hidden"><span class="t" style="right:1.5px;top:0.4px">DDS Clock (HZ)</span></div>
<div class="ed" style="left:498px;top:664px;width:120px;height:25px"><span style="left:4.4px;top:3.2px">120000000</span></div>
<span class="t dis" style="left:405px;top:699.4px;">Not Active !</span>
<div class="ed g" style="left:498px;top:694px;width:120px;height:25px"><span style="left:3.4px;top:2.65px">No PLL</span><div class="cb g" style="right:1px;top:1px;width:16px;height:21px"><i></i></div></div>
<div class="grp" style="left:368px;top:742px;width:270px;height:51px;"></div>
<span class="leg" style="left:376px;top:734.4px;">Serial-Interface</span>
<span class="t" style="left:378.3px;top:759.4px;">Interface :</span>
<div class="ed" style="left:498px;top:754px;width:120px;height:25px"><span style="left:3.4px;top:2.65px">COM27</span><div class="cb" style="right:1px;top:1px;width:16px;height:21px"><i></i></div></div>
<div class="grp" style="left:368px;top:807px;width:270px;height:106px;"></div>
<span class="leg" style="left:376px;top:799.4px;">Default Filename</span>
<span class="t r" style="right:476px;top:822.9px;">Chann. 1  Log</span>
<span class="t r" style="right:476px;top:852.9px;">Chann. 1  Lin</span>
<span class="t r" style="right:476px;top:882.9px;">Chann. 2 Log</span>
<div class="ed" style="left:503px;top:819px;width:120px;height:25px"><span style="left:4.4px;top:3.2px">defsonde1</span></div>
<div class="ed" style="left:503px;top:849px;width:120px;height:25px"><span style="left:4.4px;top:3.2px">defsonde1lin</span></div>
<div class="ed" style="left:503px;top:879px;width:120px;height:25px"><span style="left:4.4px;top:3.2px">defsonde2</span></div>
<div class="grp" style="left:368px;top:927px;width:270px;height:76px;"></div>
<span class="leg" style="left:376px;top:919.4px;">Frequencylimits</span>
<span class="t r" style="right:476.5px;top:943.9px;">max. Sweep (Hz)</span>
<div class="ed" style="left:503px;top:939px;width:120px;height:25px"><span style="left:4.4px;top:3.2px">560000000</span></div>
<span class="t" style="left:438.3px;top:968.9px;">Frequency mulitiply</span>
<div class="ed" style="left:583px;top:968px;width:40px;height:20px"><span style="left:3.4px;top:1.4px">1</span><div class="cb" style="right:1px;top:1px;width:16px;height:16px"><i></i></div></div>
<div class="grp" style="left:648px;top:557px;width:139px;height:41px;"></div>
<span class="leg" style="left:656px;top:549.4px;">Attenuator</span>
<div class="chk" style="left:658px;top:573px;width:16px;height:16px;"></div>
<span class="t" style="left:680.5px;top:572.2px;">FA-Atten</span>
<div class="grp" style="left:648px;top:617px;width:139px;height:52px;"></div>
<span class="leg" style="left:656px;top:609.4px;">Channels</span>
<div class="chk" style="left:658px;top:636px;width:16px;height:16px;"><svg width="7" height="7" viewBox="0 0 7 7" style="left:2px;top:2px" shape-rendering="crispEdges"><rect x="0" y="2" width="1" height="3" fill="#000"/><rect x="1" y="3" width="1" height="3" fill="#000"/><rect x="2" y="4" width="1" height="3" fill="#000"/><rect x="3" y="3" width="1" height="3" fill="#000"/><rect x="4" y="2" width="1" height="3" fill="#000"/><rect x="5" y="1" width="1" height="3" fill="#000"/><rect x="6" y="0" width="1" height="3" fill="#000"/></svg></div>
<span class="t" style="left:680.5px;top:635.2px;">One Chan</span>
<div class="grp" style="left:648px;top:682px;width:139px;height:51px;"></div>
<span class="leg" style="left:656px;top:674.4px;">SWR Iteration</span>
<div class="chk" style="left:658px;top:701px;width:16px;height:16px;"><svg width="7" height="7" viewBox="0 0 7 7" style="left:2px;top:2px" shape-rendering="crispEdges"><rect x="0" y="2" width="1" height="3" fill="#000"/><rect x="1" y="3" width="1" height="3" fill="#000"/><rect x="2" y="4" width="1" height="3" fill="#000"/><rect x="3" y="3" width="1" height="3" fill="#000"/><rect x="4" y="2" width="1" height="3" fill="#000"/><rect x="5" y="1" width="1" height="3" fill="#000"/><rect x="6" y="0" width="1" height="3" fill="#000"/></svg></div>
<span class="t" style="left:680.5px;top:700.2px;">Math. Corr</span>
</body></html>
